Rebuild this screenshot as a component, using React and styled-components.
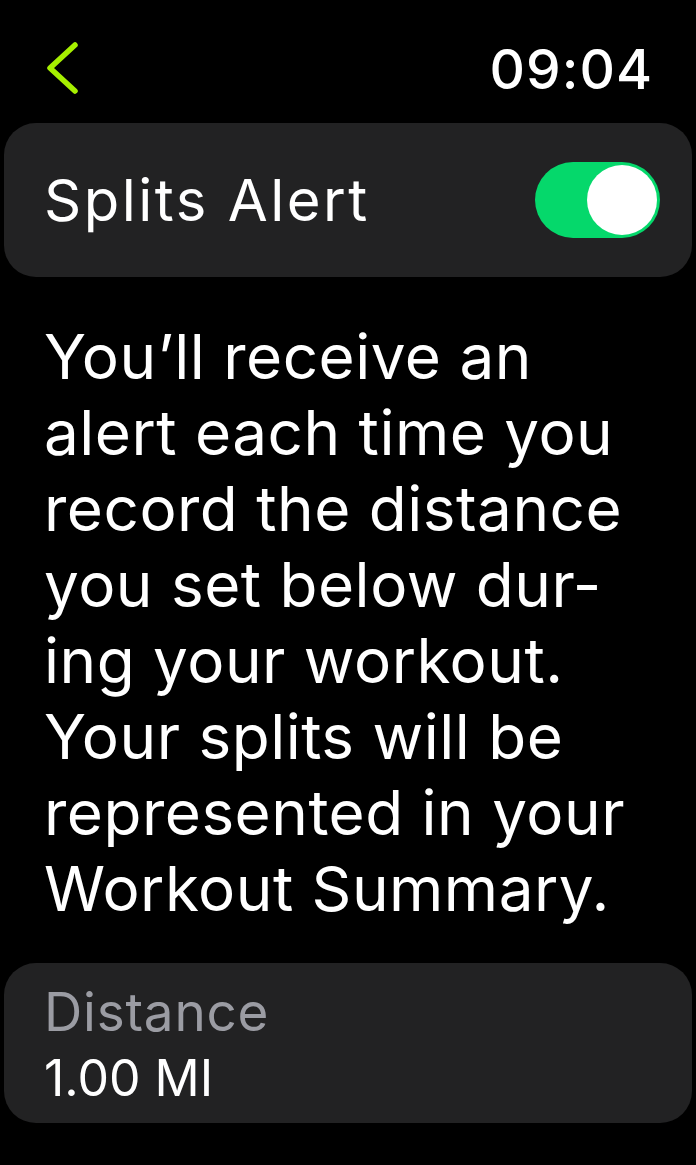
import React from "react";
import styled, { createGlobalStyle } from "styled-components";

const Global = createGlobalStyle`
  html, body {
    margin: 0;
    padding: 0;
    background: #000;
  }
  body {
    font-family: Inter, "Noto Sans", sans-serif;
    color: #fff;
    -webkit-font-smoothing: antialiased;
  }
`;

const Screen = styled.div`
  width: 696px;
  min-height: 1165px;
  background: #000;
  display: flex;
  flex-direction: column;
  box-sizing: border-box;
  padding: 0 4px;
`;

const Header = styled.header`
  height: 123px;
  display: flex;
  align-items: flex-start;
  justify-content: space-between;
  padding: 0 39px 0 40px;
`;

const BackButton = styled.button`
  margin-top: 40px;
  background: none;
  border: 0;
  padding: 0;
  width: 36px;
  height: 58px;
  display: flex;
  cursor: pointer;
`;

const Clock = styled.span`
  margin-top: 37px;
  font-size: 55px;
  line-height: 64px;
  font-weight: 500;
  letter-spacing: 1px;
`;

const Card = styled.section`
  background: #222223;
  border-radius: 32px;
  box-sizing: border-box;
  height: ${(p) => p.$height}px;
  padding: ${(p) => (p.$column ? "4px" : "0")} 32px 0 40px;
  display: flex;
  flex-direction: ${(p) => (p.$column ? "column" : "row")};
  justify-content: ${(p) => (p.$column ? "center" : "space-between")};
  align-items: ${(p) => (p.$column ? "flex-start" : "center")};
`;

const RowLabel = styled.span`
  font-size: 58px;
  font-weight: 400;
  letter-spacing: 2.5px;
`;

const Switch = styled.div`
  width: 125px;
  height: 76px;
  border-radius: 38px;
  background: #05d86b;
  position: relative;
  flex-shrink: 0;
`;

const Knob = styled.span`
  position: absolute;
  right: 3px;
  top: 3px;
  width: 70px;
  height: 70px;
  border-radius: 50%;
  background: #fff;
`;

const Description = styled.p`
  margin: 42px 0 0;
  padding: 0 20px 0 40px;
  font-size: 62px;
  line-height: 76px;
  font-weight: 400;
  letter-spacing: 0.5px;
  white-space: pre-line;
  height: 644px;
`;

const FieldLabel = styled.span`
  font-size: 53px;
  line-height: 66px;
  color: #9b9ca3;
  letter-spacing: 0.8px;
`;

const FieldValue = styled.span`
  font-size: 50px;
  line-height: 66px;
  letter-spacing: 0px;
`;

const Chevron = () => (
  <svg width="36" height="58" viewBox="0 0 36 58" fill="none">
    <path
      d="M31 5 L6 28 L31 51"
      stroke="#a6ef00"
      strokeWidth="5.5"
      strokeLinecap="round"
      strokeLinejoin="round"
    />
  </svg>
);

export default function App() {
  return (
    <>
      <Global />
      <Screen>
        <Header>
          <BackButton aria-label="Back">
            <Chevron />
          </BackButton>
          <Clock>09:04</Clock>
        </Header>
        <Card $height={154}>
          <RowLabel>Splits Alert</RowLabel>
          <Switch role="switch" aria-checked="true">
            <Knob />
          </Switch>
        </Card>
        <Description>
          {"You’ll receive an\nalert each time you\nrecord the distance\nyou set below dur-\ning your workout.\nYour splits will be\nrepresented in your\nWorkout Summary."}
        </Description>
        <Card $height={160} $column>
          <FieldLabel>Distance</FieldLabel>
          <FieldValue>1.00 MI</FieldValue>
        </Card>
      </Screen>
    </>
  );
}
